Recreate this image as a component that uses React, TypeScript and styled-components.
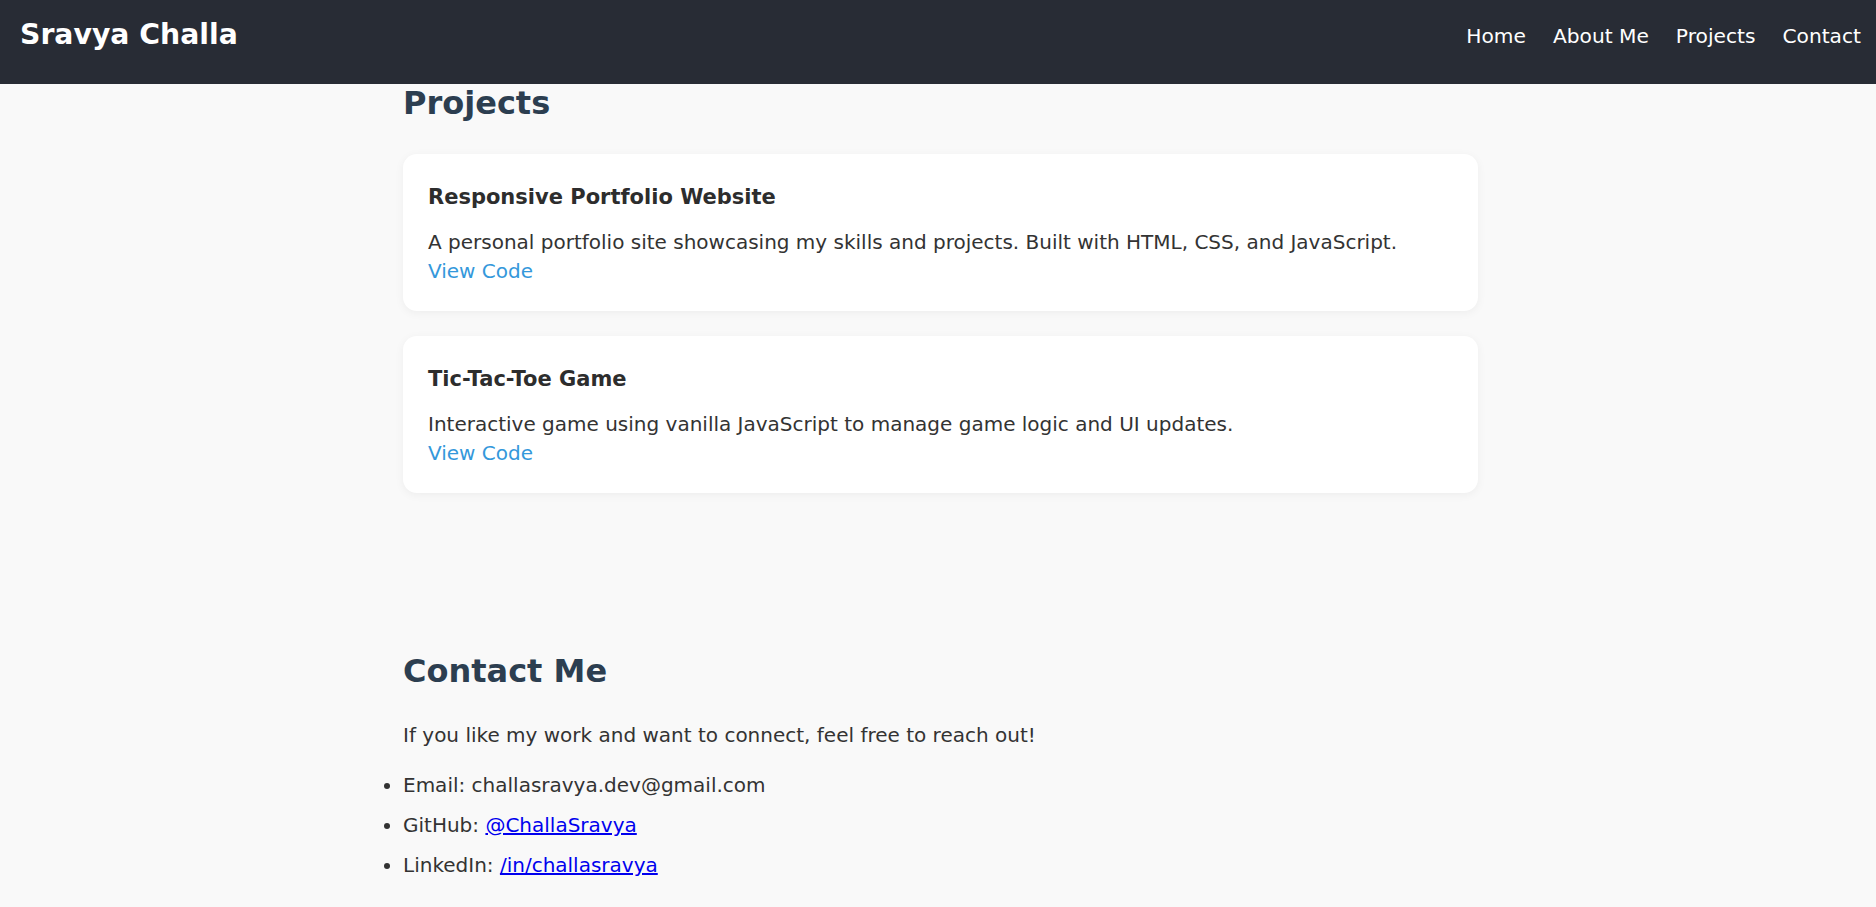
import styled, { createGlobalStyle } from "styled-components";

const GlobalStyle = createGlobalStyle`
  body {
    margin: 0;
    background: #f9f9f9;
    color: #333;
    font-family: "DejaVu Sans", "Noto Sans", sans-serif;
  }
`;

const Header = styled.header`
  height: 84px;
  box-sizing: border-box;
  padding: 0 15px 14px 20px;
  background: #282c35;
  display: flex;
  align-items: center;
  justify-content: space-between;
`;

const Logo = styled.div`
  color: #fff;
  font-size: 28.3px;
  font-weight: bold;
  line-height: 1.2;
`;

const NavList = styled.ul`
  list-style: none;
  margin: 0;
  padding: 0;
  display: flex;
  gap: 27px;
`;

const NavLink = styled.a`
  color: #fff;
  text-decoration: none;
  font-size: 20.2px;
  line-height: 1.2;
  display: block;
  padding-top: 2px;
`;

const Main = styled.main`
  box-sizing: border-box;
  max-width: 1080px;
  margin: 0 auto;
  padding-left: 5px;
`;

const Section = styled.section<{ $top?: number }>`
  padding-top: ${(p) => p.$top || 0}px;
`;

const Heading = styled.h2<{ $gap: number }>`
  margin: 0 0 ${(p) => p.$gap}px;
  font-size: 32px;
  line-height: 38px;
  font-weight: bold;
  color: #2c3e50;
`;

const Card = styled.div`
  background: #fff;
  border-radius: 14px;
  padding: 31px 25px 25px;
  margin-bottom: 25px;
  box-shadow: 0 2px 10px rgba(0, 0, 0, 0.05);
`;

const CardTitle = styled.h3`
  margin: 0 0 18px;
  font-size: 21px;
  line-height: 1.2;
  font-weight: bold;
  color: #2d2d2d;
`;

const Text = styled.p<{ $gap?: number }>`
  margin: 0 0 ${(p) => p.$gap || 0}px;
  font-size: 20px;
  line-height: 29px;
`;

const CodeLink = styled.a`
  display: block;
  font-size: 20px;
  line-height: 29px;
  color: #3498db;
  text-decoration: none;
`;

const ContactList = styled.ul`
  margin: 0;
  padding: 0;
`;

const ContactItem = styled.li`
  font-size: 20px;
  line-height: 29px;
  margin-bottom: 11px;
`;

const projects = [
  {
    title: "Responsive Portfolio Website",
    text: "A personal portfolio site showcasing my skills and projects. Built with HTML, CSS, and JavaScript.",
  },
  {
    title: "Tic-Tac-Toe Game",
    text: "Interactive game using vanilla JavaScript to manage game logic and UI updates.",
  },
];

export default function App() {
  return (
    <>
      <GlobalStyle />
      <Header>
        <Logo>Sravya Challa</Logo>
        <nav>
          <NavList>
            {["Home", "About Me", "Projects", "Contact"].map((item) => (
              <li key={item}>
                <NavLink href="#">{item}</NavLink>
              </li>
            ))}
          </NavList>
        </nav>
      </Header>
      <Main>
        <Section>
          <Heading $gap={32}>Projects</Heading>
          {projects.map((p) => (
            <Card key={p.title}>
              <CardTitle>{p.title}</CardTitle>
              <Text>{p.text}</Text>
              <CodeLink href="#">View Code</CodeLink>
            </Card>
          ))}
        </Section>
        <Section $top={134}>
          <Heading $gap={31}>Contact Me</Heading>
          <Text $gap={21}>If you like my work and want to connect, feel free to reach out!</Text>
          <ContactList>
            <ContactItem>Email: challasravya.dev@gmail.com</ContactItem>
            <ContactItem>
              GitHub: <a href="#">@ChallaSravya</a>
            </ContactItem>
            <ContactItem>
              LinkedIn: <a href="#">/in/challasravya</a>
            </ContactItem>
          </ContactList>
        </Section>
      </Main>
    </>
  );
}
